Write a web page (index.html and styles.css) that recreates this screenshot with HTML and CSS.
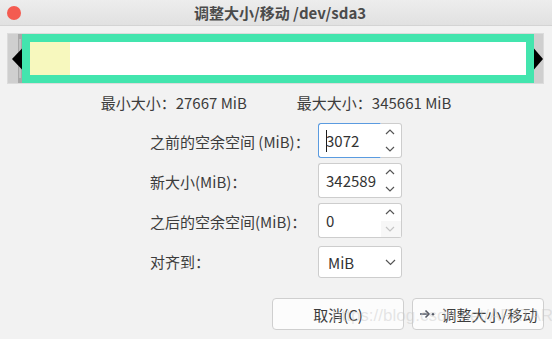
FILE: index.html
```html
<!DOCTYPE html>
<html lang="zh-CN">
<head>
<meta charset="utf-8">
<title>调整大小/移动 /dev/sda3</title>
<link rel="stylesheet" href="styles.css">
</head>
<body>
<div class="window">
  <header class="titlebar">
    <span class="close"></span>
    <h1 class="title">调整大小/移动 /dev/sda3</h1>
    <span></span>
  </header>

  <div class="bar">
    <svg class="grip" width="14" height="49" viewBox="0 0 14 49">
      <rect x="10" y="0" width="4" height="49" fill="#a8a8a8"/>
      <rect x="11.5" y="5" width="1" height="39" fill="#d9d9d9"/>
      <polygon points="4,25 14,14.5 14,35.5" fill="#000"/>
    </svg>
    <div class="part"><div class="used"></div></div>
    <svg class="grip" width="9" height="49" viewBox="0 0 9 49">
      <polygon points="0,14.5 9,25 0,35.5" fill="#000"/>
    </svg>
  </div>

  <div class="limits">
    <span>最小大小：27667 MiB</span>
    <span>最大大小：345661 MiB</span>
  </div>

  <div class="form">
    <label class="label">之前的空余空间 (MiB)：</label>
    <div class="spin focused">
      <div class="entry"><span class="caret"></span>3072</div>
      <div class="btns">
        <span class="step"><svg width="10" height="6" viewBox="0 0 10 6"><polyline points="1,5 5,1 9,5" /></svg></span>
        <span class="step"><svg width="10" height="6" viewBox="0 0 10 6"><polyline points="1,1 5,5 9,1" /></svg></span>
      </div>
    </div>

    <label class="label">新大小(MiB)：</label>
    <div class="spin">
      <div class="entry">342589</div>
      <div class="btns">
        <span class="step"><svg width="10" height="6" viewBox="0 0 10 6"><polyline points="1,5 5,1 9,5" /></svg></span>
        <span class="step"><svg width="10" height="6" viewBox="0 0 10 6"><polyline points="1,1 5,5 9,1" /></svg></span>
      </div>
    </div>

    <label class="label">之后的空余空间(MiB)：</label>
    <div class="spin">
      <div class="entry">0</div>
      <div class="btns">
        <span class="step"><svg width="10" height="6" viewBox="0 0 10 6"><polyline points="1,5 5,1 9,5" /></svg></span>
        <span class="step disabled"><svg width="10" height="6" viewBox="0 0 10 6"><polyline points="1,1 5,5 9,1" /></svg></span>
      </div>
    </div>

    <label class="label">对齐到：</label>
    <div class="combo">
      <span>MiB</span>
      <svg width="11" height="7" viewBox="0 0 11 7"><polyline points="1,1 5.5,5.5 10,1" /></svg>
    </div>
  </div>

  <div class="actions">
    <button class="btn">取消(C)</button>
    <button class="btn">
      <svg class="btn-icon" width="17" height="10" viewBox="0 0 17 10">
        <line x1="1" y1="5" x2="10" y2="5"/>
        <polyline points="6.5,1.5 10,5 6.5,8.5"/>
        <circle cx="14" cy="5.2" r="1.3"/>
      </svg>
      调整大小/移动
    </button>
  </div>

  <div class="watermark">https://blog.csdn.net/APATAR</div>
</div>
</body>
</html>
```

FILE: styles.css
```css
* { box-sizing: border-box; }

html, body {
  margin: 0;
  padding: 0;
  background: #f2f2f2;
}

body {
  font-family: "Noto Sans CJK SC", "Noto Sans", sans-serif;
  font-size: 15px;
  color: #3c3c3c;
}

.window {
  position: relative;
  width: 552px;
  height: 339px;
  overflow: hidden;
  background: #f2f2f2;
}

.titlebar {
  height: 26px;
  display: grid;
  grid-template-columns: 1fr auto 1fr;
  align-items: center;
  background: linear-gradient(#ededed, #e1e1e1);
  border-bottom: 1px solid #d4d4d4;
}

.close {
  width: 14px;
  height: 14px;
  margin-left: 7px;
  border-radius: 50%;
  background: #f45b50;
}

.title {
  margin: 0 0 0 8px;
  font-size: 15px;
  font-weight: bold;
  color: #4b4b4b;
  line-height: 25px;
}

.bar {
  display: flex;
  width: 537px;
  height: 51px;
  margin: 7px 0 0 7px;
  background: #cfcfcf;
  border: 1px solid #dcdcdc;
}

.grip { display: block; flex: none; }

.part {
  flex: none;
  width: 512px;
  height: 49px;
  border: 8px solid #43e5ae;
  background: #ffffff;
}

.used {
  width: 40px;
  height: 100%;
  background: #f7f8be;
}

.limits {
  display: flex;
  justify-content: center;
  gap: 50px;
  margin-top: 10px;
  line-height: 18px;
}

.form {
  display: grid;
  grid-template-columns: 168px 84px;
  grid-auto-rows: 35px;
  row-gap: 5px;
  margin: 11px 0 0 150px;
}

.label {
  align-self: center;
  padding-top: 2px;
  white-space: nowrap;
}

.spin {
  display: flex;
  height: 35px;
}

.entry {
  flex: 1;
  display: flex;
  align-items: center;
  padding-left: 7px;
  background: #ffffff;
  border: 1px solid #cdcdcd;
  border-right: none;
  border-radius: 3px 0 0 3px;
  color: #333;
}

.spin.focused .entry {
  border-color: #5a9be0;
  border-right: 1px solid transparent;
}

.caret {
  display: inline-block;
  width: 1px;
  height: 22px;
  background: #1c1c1c;
  margin-right: -1px;
}

.btns {
  width: 21px;
  display: flex;
  flex-direction: column;
  background: #ffffff;
  border: 1px solid #cdcdcd;
  border-left: none;
  border-radius: 0 3px 3px 0;
}

.step {
  flex: 1;
  display: flex;
  align-items: center;
  justify-content: center;
  padding-right: 3px;
}

.step svg polyline,
.combo svg polyline {
  fill: none;
  stroke: #555;
  stroke-width: 1.2;
}

.step.disabled { background: #f7f7f7; }
.step.disabled svg polyline { stroke: #c4c4c4; }

.combo {
  align-self: end;
  height: 32px;
  display: flex;
  align-items: center;
  justify-content: space-between;
  padding: 0 5px 0 9px;
  background: #ffffff;
  border: 1px solid #cdcdcd;
  border-radius: 3px;
  color: #333;
}

.actions {
  display: flex;
  justify-content: flex-end;
  gap: 8px;
  margin-top: 20px;
  padding-right: 8px;
}

.btn {
  width: 132px;
  height: 32px;
  display: flex;
  align-items: center;
  justify-content: center;
  gap: 6px;
  font: inherit;
  color: #3c3c3c;
  background: #fcfcfc;
  border: 1px solid #cfcfcf;
  border-radius: 4px;
  padding: 0;
}

.btn-icon line,
.btn-icon polyline {
  fill: none;
  stroke: #555a66;
  stroke-width: 1.6;
}

.btn-icon circle { fill: #555a66; }

.watermark {
  position: absolute;
  left: 332px;
  top: 306px;
  font-family: "Liberation Sans", sans-serif;
  font-size: 17px;
  color: rgba(200, 200, 200, 0.45);
  pointer-events: none;
  white-space: nowrap;
}
```
